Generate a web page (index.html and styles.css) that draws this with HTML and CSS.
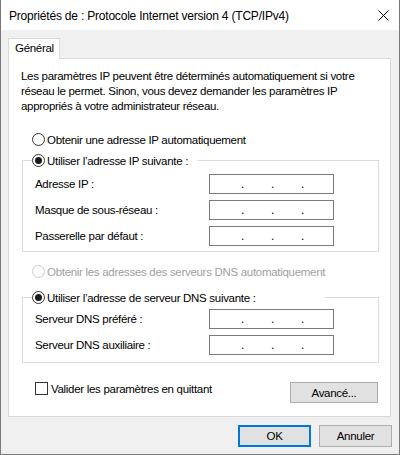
FILE: index.html
```html
<!DOCTYPE html>
<html lang="fr">
<head>
<meta charset="utf-8">
<title>Propriétés de : Protocole Internet version 4 (TCP/IPv4)</title>
<link rel="stylesheet" href="styles.css">
</head>
<body>
<div class="window">
  <div class="titlebar">
    <span class="title">Propriétés de : Protocole Internet version 4 (TCP/IPv4)</span>
    <svg class="close" width="11" height="11" viewBox="0 0 11 11" aria-label="Fermer"><path d="M0.5 0.5 L10.5 10.5 M10.5 0.5 L0.5 10.5" stroke="#000" stroke-width="1" fill="none"/></svg>
  </div>
  <div class="client">
    <div class="tabs"><div class="tab">Général</div></div>
    <div class="panel">
      <p class="intro">Les paramètres IP peuvent être déterminés automatiquement si votre<br>réseau le permet. Sinon, vous devez demander les paramètres IP<br>appropriés à votre administrateur réseau.</p>

      <label class="radio opt-auto-ip"><span class="rb"></span>Obtenir une adresse IP automatiquement</label>

      <fieldset class="group group-ip">
        <legend class="legend legend-ip"><label class="radio"><span class="rb checked"></span>Utiliser l’adresse IP suivante :</label></legend>
        <div class="field first"><span class="lbl">Adresse IP :</span><div class="ip"><span class="dot">.</span><span class="dot">.</span><span class="dot">.</span></div></div>
        <div class="field"><span class="lbl">Masque de sous-réseau :</span><div class="ip"><span class="dot">.</span><span class="dot">.</span><span class="dot">.</span></div></div>
        <div class="field"><span class="lbl">Passerelle par défaut :</span><div class="ip"><span class="dot">.</span><span class="dot">.</span><span class="dot">.</span></div></div>
      </fieldset>

      <label class="radio disabled opt-auto-dns"><span class="rb"></span>Obtenir les adresses des serveurs DNS automatiquement</label>

      <fieldset class="group group-dns">
        <legend class="legend legend-dns"><label class="radio"><span class="rb checked"></span>Utiliser l’adresse de serveur DNS suivante :</label></legend>
        <div class="field first"><span class="lbl">Serveur DNS préféré :</span><div class="ip"><span class="dot">.</span><span class="dot">.</span><span class="dot">.</span></div></div>
        <div class="field"><span class="lbl">Serveur DNS auxiliaire :</span><div class="ip"><span class="dot">.</span><span class="dot">.</span><span class="dot">.</span></div></div>
      </fieldset>

      <div class="bottom-row">
        <label class="check"><span class="cb"></span>Valider les paramètres en quittant</label>
        <button class="btn btn-adv" type="button">Avancé...</button>
      </div>
    </div>
    <div class="buttons">
      <button class="btn btn-main default" type="button">OK</button>
      <button class="btn btn-main" type="button">Annuler</button>
    </div>
  </div>
</div>
</body>
</html>
```

FILE: styles.css
```css
* { box-sizing: border-box; }

html, body {
  margin: 0;
  padding: 0;
  background: #fff;
}

body {
  font-family: "Liberation Sans", Arial, sans-serif;
  font-size: 11.5px;
  letter-spacing: -0.3px;
  color: #000;
}

.window {
  width: 400px;
  height: 455px;
  border: 1px solid #7a7a7a;
  border-top: 0;
  display: flex;
  flex-direction: column;
  background: #f0f0f0;
}

.titlebar {
  flex: none;
  height: 30px;
  background: #fff;
  display: flex;
  align-items: flex-start;
  padding-left: 8px;
}

.title {
  flex: 1;
  font-size: 12px;
  letter-spacing: -0.2px;
  line-height: 30px;
  padding-top: 1px;
}

.close {
  margin-top: 10px;
  margin-right: 10px;
}

.client {
  flex: 1;
  padding: 8px 7px 0 7px;
}

.tabs {
  display: flex;
}

.tab {
  position: relative;
  z-index: 1;
  width: 52px;
  height: 21px;
  margin-bottom: -1px;
  padding-left: 6px;
  line-height: 18px;
  background: #fff;
  border: 1px solid #d9d9d9;
  border-bottom: 0;
}

.panel {
  width: 383px;
  height: 359px;
  border: 1px solid #d9d9d9;
  background: #fff;
  padding: 10px 12px 0 12px;
}

.intro {
  margin: 0;
  line-height: 15px;
}

.radio {
  display: flex;
  align-items: center;
  height: 15px;
  white-space: nowrap;
}

.rb {
  flex: none;
  width: 13px;
  height: 13px;
  margin-right: 2px;
  border: 1px solid #333;
  border-radius: 50%;
  background: #fff;
  display: flex;
  align-items: center;
  justify-content: center;
}

.rb.checked::after {
  content: "";
  width: 7px;
  height: 7px;
  border-radius: 50%;
  background: #1a1a1a;
}

.radio.disabled {
  color: #a0a0a0;
}

.radio.disabled .rb {
  border-color: #cccccc;
}

.opt-auto-ip {
  margin: 18px 0 0 11px;
}

.opt-auto-dns {
  margin: 12px 0 0 11px;
}

.group {
  width: 357px;
  margin: 0 0 0 1px;
  padding: 0 0 5px 12px;
  border: 1px solid #dcdcdc;
}

.group-ip {
  margin-top: 6px;
  padding-bottom: 5px;
}

.group-dns {
  margin-top: 11px;
  padding-bottom: 7px;
}

.legend {
  margin-left: -3px;
  padding: 0;
  background: #fff;
}

.legend-ip { width: 166px; }
.legend-dns { width: 293px; }

.field {
  display: grid;
  grid-template-columns: 174px 125px;
  align-items: center;
  height: 20px;
  margin-top: 6px;
}

.group-ip .field.first { margin-top: 6px; }
.group-dns .field.first { margin-top: 4px; }

.ip {
  height: 20px;
  border: 1px solid #7a7a7a;
  background: #fff;
  display: flex;
  padding-left: 31px;
  font-size: 12px;
  line-height: 18px;
  letter-spacing: 0;
}

.dot {
  width: 30px;
}

.bottom-row {
  display: flex;
  justify-content: space-between;
  align-items: flex-start;
  margin-top: 19px;
}

.check {
  display: flex;
  align-items: center;
  height: 13px;
  margin-left: 14px;
  white-space: nowrap;
}

.cb {
  flex: none;
  width: 13px;
  height: 13px;
  margin-right: 3px;
  border: 1px solid #333;
  background: #fff;
}

.btn {
  font: inherit;
  letter-spacing: inherit;
  color: #000;
  background: #e1e1e1;
  border: 1px solid #adadad;
  border-radius: 0;
  padding: 0;
  margin: 0;
}

.btn-adv {
  width: 88px;
  height: 21px;
}

.buttons {
  display: flex;
  justify-content: flex-end;
  gap: 8px;
  margin-top: 8px;
}

.btn-main {
  width: 73px;
  height: 22px;
}

.btn.default {
  border: 2px solid #0078d7;
}
```
